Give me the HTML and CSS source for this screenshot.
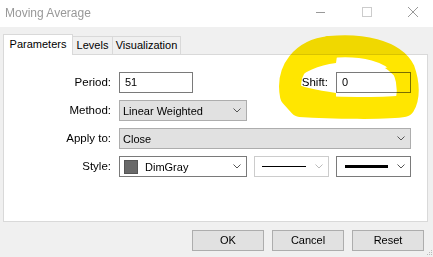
FILE: index.html
```html
<!DOCTYPE html>
<html lang="en">
<head>
    <meta charset="UTF-8">
    <title>Moving Average</title>
    <link rel="stylesheet" href="styles.css">
</head>
<body>
    <div class="titlebar">
        <span class="title">Moving Average</span>
        <div class="winctl">
            <svg class="ctl" width="12" height="12" viewBox="0 0 12 12"><path d="M1 6.5H10" stroke="#999" stroke-width="1"/></svg>
            <svg class="ctl" width="12" height="12" viewBox="0 0 12 12"><rect x="1.5" y="1.5" width="9" height="9" fill="none" stroke="#ccc"/></svg>
            <svg class="ctl" width="12" height="12" viewBox="0 0 12 12"><path d="M1 1L11 11M11 1L1 11" stroke="#999" stroke-width="1"/></svg>
        </div>
    </div>

    <div class="tabs">
        <div class="tab active">Parameters</div>
        <div class="tab levels">Levels</div>
        <div class="tab vis">Visualization</div>
    </div>

    <div class="panel">
        <div class="form">
            <div class="lbl">Period:</div>
            <div class="row">
                <div class="input w-period">51</div>
                <div class="lbl shift-lbl">Shift:</div>
                <div class="input w-shift">0</div>
            </div>

            <div class="lbl">Method:</div>
            <div class="row">
                <div class="select w-method"><span>Linear Weighted</span><svg class="chev" width="8" height="5" viewBox="0 0 8 5"><path d="M0.5 0.5L4 4L7.5 0.5" fill="none" stroke="#555"/></svg></div>
            </div>

            <div class="lbl">Apply to:</div>
            <div class="row">
                <div class="select w-full"><span>Close</span><svg class="chev" width="8" height="5" viewBox="0 0 8 5"><path d="M0.5 0.5L4 4L7.5 0.5" fill="none" stroke="#555"/></svg></div>
            </div>

            <div class="lbl">Style:</div>
            <div class="row style-row">
                <div class="select white w-method"><i class="swatch"></i><span class="swatch-name">DimGray</span><svg class="chev" width="8" height="5" viewBox="0 0 8 5"><path d="M0.5 0.5L4 4L7.5 0.5" fill="none" stroke="#555"/></svg></div>
                <div class="select white light w-line"><i class="line thin"></i><svg class="chev" width="8" height="5" viewBox="0 0 8 5"><path d="M0.5 0.5L4 4L7.5 0.5" fill="none" stroke="#bbb"/></svg></div>
                <div class="select white w-line"><i class="line thick"></i><svg class="chev" width="8" height="5" viewBox="0 0 8 5"><path d="M0.5 0.5L4 4L7.5 0.5" fill="none" stroke="#555"/></svg></div>
            </div>
        </div>
    </div>

    <div class="buttons">
        <div class="btn">OK</div>
        <div class="btn">Cancel</div>
        <div class="btn">Reset</div>
    </div>

    <svg class="grip" width="6" height="6" viewBox="0 0 6 6">
        <rect x="4" y="0" width="1" height="1" fill="#bbb"/>
        <rect x="2" y="2" width="1" height="1" fill="#bbb"/>
        <rect x="4" y="2" width="1" height="1" fill="#bbb"/>
        <rect x="0" y="4" width="1" height="1" fill="#bbb"/>
        <rect x="2" y="4" width="1" height="1" fill="#bbb"/>
        <rect x="4" y="4" width="1" height="1" fill="#bbb"/>
    </svg>

    <!-- highlighter scribble over the Shift field -->
    <svg class="marker" width="433" height="257" viewBox="0 0 433 257">
        <path fill="none" stroke="#ffe600" stroke-width="22" stroke-linejoin="round" d="M291 96 C286 70 302 50 330 47 C360 44 394 50 404 70 C409 84 409 98 404 106 C388 109 330 108 300 106 Z"/>
        <path fill="#ffe600" d="M318 40 L327 36 L336 37 L336 48 L318 48 Z"/>
        <path fill="#ffe600" d="M293 82 L298 58 L337 56 L336 63 C318 65 304 72 293 82 Z"/>
        <path fill="#ffe600" d="M293 82 C301 87 316 90 336 93 L336 97 L292 97 Z"/>
        <path fill="#ffe600" d="M385 68 C394 74 399 81 401 88 L406 88 L406 62 Z"/>
    </svg>
</body>
</html>
```

FILE: styles.css
```css
*{box-sizing:border-box;margin:0;padding:0}
body{width:433px;height:257px;background:#f0f0f0;font-family:"Liberation Sans",Arial,sans-serif;font-size:11px;color:#000;position:relative;overflow:hidden}
.titlebar{height:27px;background:#fff;display:flex;align-items:center;justify-content:space-between;padding-left:5px}
.title{color:#999;font-size:12px;margin-top:-2px}
.winctl{display:flex;align-items:center;margin-top:-3px}
.ctl{margin-left:34px}
.ctl:last-child{margin-right:14px}

.tabs{display:flex;align-items:flex-end;height:20px;margin:7px 0 0 3px;position:relative;z-index:1}
.tab{height:18px;line-height:17px;border:1px solid #d9d9d9;border-bottom:none;background:#f0f0f0;text-align:center}
.tab.active{height:21px;width:70px;line-height:19px;background:#fff;margin-bottom:-1px}
.tab.levels{width:40px;border-left:none}
.tab.vis{width:68px;border-left:none}

.panel{height:168px;margin:0 5px 0 3px;border:1px solid #d9d9d9;background:#fff;padding-top:17px}
.form{display:grid;grid-template-columns:107px 292px;column-gap:8px;row-gap:7px;grid-auto-rows:21px}
.lbl{text-align:right;line-height:21px;font-size:11.5px}
.row{display:flex;align-items:stretch}
.shift-lbl{margin-left:auto;margin-right:8px}
.style-row{gap:7px}

.input{border:1px solid #7a7a7a;background:#fff;padding-left:5px;line-height:19px}
.w-period{width:74px}
.w-shift{width:75px}
.select{display:flex;align-items:center;border:1px solid #adadad;background:#e1e1e1;padding:0 5px 0 3px}
.select span{flex:1}
.select.white{background:#fff;border-color:#7a7a7a}
.select.light{border-color:#ccc}
.w-method{width:128px}
.w-full{width:292px}
.w-line{width:75px}
.chev{margin-left:auto;flex:none}
.swatch{width:14px;height:14px;background:#696969;border:1px solid #555;margin-left:1px;flex:none}
.swatch-name{margin-left:7px}
.line{display:block;height:1px;width:44px;background:#000;margin-left:4px}
.line.thick{height:3px;width:43px;margin-left:5px}

.buttons{display:flex;justify-content:flex-end;gap:8px;margin-top:8px;padding-right:9px}
.btn{width:72px;height:21px;line-height:19px;text-align:center;border:1px solid #adadad;background:#e1e1e1}

.grip{position:absolute;right:0;bottom:1px}
.marker{position:absolute;left:0;top:0;pointer-events:none;mix-blend-mode:multiply}
```
